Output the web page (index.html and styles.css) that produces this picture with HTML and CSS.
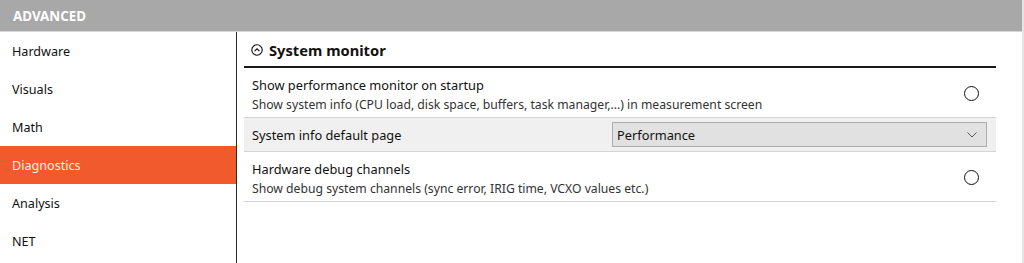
FILE: index.html
```html
<!DOCTYPE html>
<html>
<head>
<meta charset="utf-8">
<link rel="stylesheet" href="styles.css">
</head>
<body>
<div class="app">
  <div class="topbar">ADVANCED</div>
  <div class="main">
    <nav class="sidebar">
      <div class="nav-item">Hardware</div>
      <div class="nav-item">Visuals</div>
      <div class="nav-item">Math</div>
      <div class="nav-item active">Diagnostics</div>
      <div class="nav-item">Analysis</div>
      <div class="nav-item">NET</div>
    </nav>
    <section class="content">
      <div class="section-head">
        <svg class="collapse-icon" width="12" height="12" viewBox="0 0 12 12"><circle cx="6" cy="6" r="5.2" fill="none" stroke="#111" stroke-width="1.1"/><path d="M3.6 7.2 L6 4.8 L8.4 7.2" fill="none" stroke="#111" stroke-width="1.2"/></svg>
        <span class="section-title">System monitor</span>
      </div>
      <div class="row">
        <div class="row-text">
          <div class="row-title">Show performance monitor on startup</div>
          <div class="row-desc">Show system info (CPU load, disk space, buffers, task manager,...) in measurement screen</div>
        </div>
        <span class="radio"></span>
      </div>
      <div class="row row-select">
        <div class="row-title">System info default page</div>
        <div class="select">
          <span>Performance</span>
          <svg width="10" height="6" viewBox="0 0 10 6"><path d="M0.5 0.5 L5 5 L9.5 0.5" fill="none" stroke="#555" stroke-width="1"/></svg>
        </div>
      </div>
      <div class="row">
        <div class="row-text">
          <div class="row-title">Hardware debug channels</div>
          <div class="row-desc">Show debug system channels (sync error, IRIG time, VCXO values etc.)</div>
        </div>
        <span class="radio"></span>
      </div>
    </section>
  </div>
</div>
</body>
</html>
```

FILE: styles.css
```css
html, body {
  margin: 0;
  padding: 0;
  background: #fff;
}
body {
  font-family: "Noto Sans", "Open Sans", sans-serif;
  color: #111;
  width: 1024px;
  height: 263px;
  overflow: hidden;
}
.app {
  width: 1022px;
  border-right: 2px solid #e4e4e4;
  height: 263px;
}
.topbar {
  height: 31px;
  background: #a8a8a8;
  border-bottom: 1px solid #d6d6d6;
  color: #fff;
  font-weight: bold;
  font-size: 13.4px;
  line-height: 32px;
  padding-left: 13px;
}
.main {
  display: flex;
  height: 231px;
}
.sidebar {
  width: 236px;
  border-right: 1px solid #2a2a2a;
  flex: none;
}
.nav-item {
  height: 38px;
  line-height: 39px;
  padding-left: 12px;
  font-size: 12.6px;
  color: #111;
}
.nav-item.active {
  background: #f15a2c;
  color: #fdeee8;
}
.content {
  flex: 1;
  padding: 4px 26px 0 7px;
}
.section-head {
  display: flex;
  align-items: center;
  border-bottom: 2px solid #1a1a1a;
  padding-left: 7px;
  gap: 6px;
  box-sizing: border-box;
  height: 32px;
  padding-bottom: 2px;
}
.collapse-icon {
  flex: none;
}
.section-title {
  font-weight: bold;
  font-size: 14.7px;
}
.row {
  display: flex;
  align-items: center;
  justify-content: space-between;
  border-bottom: 1px solid #d4d4d4;
  padding: 8px 17px 3px 8px;
}
.row-title {
  font-size: 12.8px;
  line-height: 18px;
}
.row-desc {
  font-size: 12.2px;
  line-height: 18px;
  margin-top: 2px;
  color: #333;
}
.radio {
  width: 13px;
  height: 13px;
  border: 1.6px solid #111;
  border-radius: 50%;
  margin-bottom: 4px;
}
.row-select {
  background: #f0f0f0;
  padding: 4px 9px 4px 8px;
  height: 25px;
}
.select {
  width: 375px;
  height: 25px;
  box-sizing: border-box;
  background: #e1e1e1;
  border: 1px solid #adadad;
  display: flex;
  align-items: center;
  justify-content: space-between;
  padding: 0 9px 0 4px;
  font-size: 12.8px;
}
```
